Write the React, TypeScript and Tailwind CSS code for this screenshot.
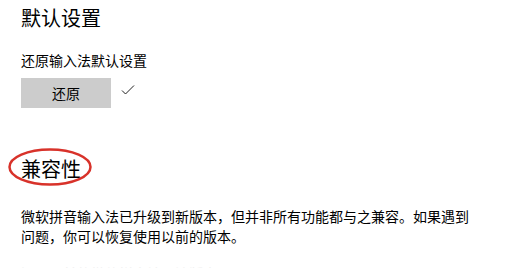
export default function App() {
  return (
    <div
      className="w-[505px] h-[268px] overflow-hidden bg-white text-black pl-[21px] pt-[4px]"
      style={{ fontFamily: '"Noto Sans CJK SC", "Noto Sans", sans-serif' }}
    >
      <h2 className="text-[20px] leading-[28px] font-normal">默认设置</h2>

      <p className="mt-[18px] text-[14px] leading-[20px]">还原输入法默认设置</p>
      <div className="mt-[8px] flex items-center">
        <button className="w-[90px] h-[30px] bg-[#cccccc] text-[14px] leading-[20px]">还原</button>
        <svg className="ml-[10px] mb-[6px]" width="14" height="12" viewBox="0 0 14 12">
          <path d="M1 6.5 L4.5 10 L13 1.5" fill="none" stroke="#222" strokeWidth="1" />
        </svg>
      </div>

      <div className="relative mt-[47px] w-fit">
        <h2 className="text-[20px] leading-[28px] font-normal">兼容性</h2>
        <svg
          className="absolute left-[-13px] top-[-8px] pointer-events-none"
          width="84"
          height="40"
          viewBox="0 0 84 40"
        >
          <ellipse cx="42" cy="20" rx="40.5" ry="17.5" fill="none" stroke="#d8322a" strokeWidth="2.5" />
        </svg>
      </div>

      <p className="mt-[23px] w-[460px] text-[14px] leading-[20px]">
        微软拼音输入法已升级到新版本，但并非所有功能都与之兼容。如果遇到问题，你可以恢复使用以前的版本。
      </p>
      <p className="mt-[17px] text-[14px] leading-[20px] text-[#f0f0f0]">还原以前的微软拼音输入法版本</p>
    </div>
  )
}
